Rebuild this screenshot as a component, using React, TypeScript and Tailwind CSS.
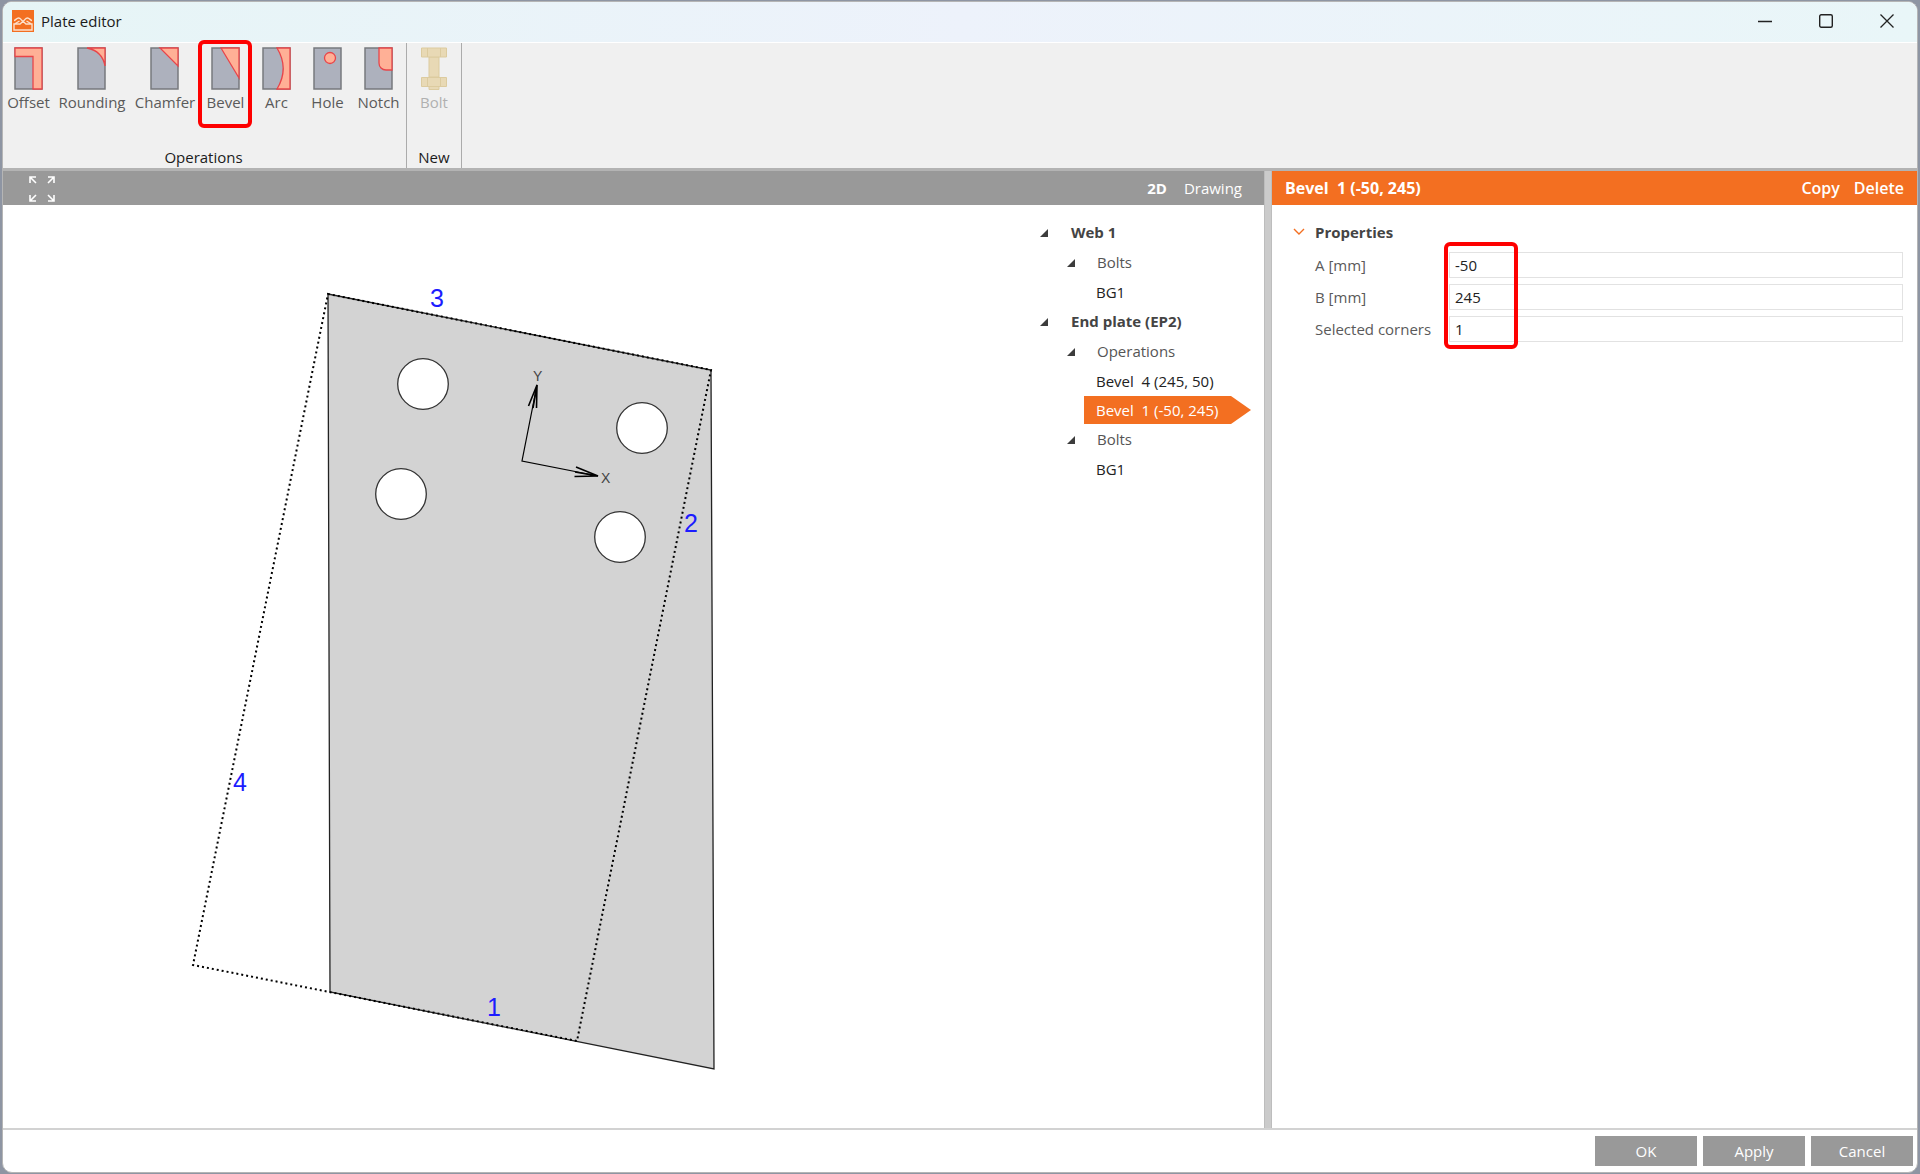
import { useState } from 'react';
import type { ReactNode } from 'react';
import clsx from 'clsx';

type TreeItem = {
  label: string;
  level: 0 | 1 | 2;
};

const TREE: TreeItem[] = [
  { label: 'Web 1', level: 0 },
  { label: 'Bolts', level: 1 },
  { label: 'BG1', level: 2 },
  { label: 'End plate (EP2)', level: 0 },
  { label: 'Operations', level: 1 },
  { label: 'Bevel  4 (245, 50)', level: 2 },
  { label: 'Bevel  1 (-50, 245)', level: 2 },
  { label: 'Bolts', level: 1 },
  { label: 'BG1', level: 2 },
];

const FIELDS = [
  { id: 'a', label: 'A [mm]', value: '-50' },
  { id: 'b', label: 'B [mm]', value: '245' },
  { id: 'corners', label: 'Selected corners', value: '1' },
];

const HOLES = [
  [420, 179],
  [639, 223],
  [398, 289],
  [617, 332],
];

function PlateIcon({ children }: { children?: ReactNode }) {
  return (
    <svg width="30" height="43" viewBox="0 0 30 43" aria-hidden="true">
      <rect x="1" y="1" width="27" height="41" fill="#adb1bd" stroke="#77797e" strokeWidth="1.5" />
      <g fill="#ffb096" stroke="#e8454a" strokeWidth="1.3">
        {children}
      </g>
    </svg>
  );
}

function BoltIcon() {
  return (
    <svg width="28" height="43" viewBox="0 0 28 43" aria-hidden="true">
      <g fill="#e8d9b5" stroke="#dccb9f">
        <path d="M9 10h10v20H9z" />
        <path d="M9 39h10v3.500H9z" />
        <path d="M1.500 1h25v9h-25z" />
        <path d="M1.500 30.500h25v9h-25z" />
        <path d="M7.500 1v9M20.500 1v9M7.500 30.500v9M20.500 30.500v9" />
      </g>
    </svg>
  );
}

const OPERATIONS = [
  {
    name: 'Offset',
    width: 'w-[51px]',
    shape: <path d="M1 1h27v41h-9V9.500H1z" />,
  },
  {
    name: 'Rounding',
    width: 'w-[76px]',
    shape: <path d="M10 1h18v18C26 8 20 3 10 1z" />,
  },
  {
    name: 'Chamfer',
    width: 'w-[70px]',
    shape: <path d="M10 1h18v18z" />,
  },
  {
    name: 'Bevel',
    width: 'w-[51px]',
    shape: <path d="M10 1h18v30z" />,
  },
  {
    name: 'Arc',
    width: 'w-[51px]',
    shape: <path d="M15 1h13v41H15C23.500 28 23.500 15 15 1z" />,
  },
  {
    name: 'Hole',
    width: 'w-[51px]',
    shape: <circle cx="17" cy="11" r="5.500" />,
  },
  {
    name: 'Notch',
    width: 'w-[51px]',
    shape: <path d="M15 1h13v22h-6c-4 0-7-3-7-7z" />,
  },
];

function TitleBar() {
  return (
    <header className="flex h-[41px] shrink-0 items-center justify-between border-b border-white bg-linear-to-r from-[#e6f5f6] via-[#edf2fb] to-[#e9f6f8] pb-[2px] pl-[9px] text-[#1b1b1b]">
      <div className="flex items-center gap-[7px]">
        <svg width="22" height="22" viewBox="0 0 22 22" aria-hidden="true">
          <path d="M0 0h22v22H0z" fill="#f36f21" />
          <path
            d="M7.500 14H2v6h18v-6h-5.500M2 10.500c1.500 0 2.500-2.500 4.500-2.500 1.500 0 2 .8 3 2l5 4.500M20 10.500c-1.500 0-2.500-2.500-4.500-2.500-1.500 0-2 .8-3 2l-5 4.500M2.500 14l5-3M19.500 14l-5-3"
            fill="none"
            stroke="#fde0cb"
            strokeWidth="1.400"
          />
        </svg>
        <h1 className="text-[15px]">Plate editor</h1>
      </div>
      <div className="flex h-full">
        <button aria-label="Minimize" className="flex w-[61px] items-center justify-center">
          <svg width="14" height="14" viewBox="0 0 14 14" stroke="#222" strokeWidth="1.300">
            <path d="M0 7.500h14" />
          </svg>
        </button>
        <button aria-label="Maximize" className="flex w-[61px] items-center justify-center">
          <svg width="14" height="14" viewBox="0 0 14 14" fill="none" stroke="#222" strokeWidth="1.400">
            <rect x="0.700" y="0.700" width="12.600" height="12.600" rx="1.500" />
          </svg>
        </button>
        <button aria-label="Close" className="flex w-[61px] items-center justify-center">
          <svg width="14" height="14" viewBox="0 0 14 14" stroke="#222" strokeWidth="1.300">
            <path d="M0.500 0.500l13 13M13.500 0.500l-13 13" />
          </svg>
        </button>
      </div>
    </header>
  );
}

function Ribbon() {
  return (
    <div className="flex h-[125px] shrink-0 bg-[#f0f0f0] text-[15px]">
      <section className="flex flex-col justify-between border-r border-[#ababab] pt-1 pr-[2px]">
        <div className="flex">
          {OPERATIONS.map((op) => (
            <button
              key={op.name}
              className={clsx('relative flex flex-col items-center text-[#5a5a5a]', op.width)}
            >
              <PlateIcon>{op.shape}</PlateIcon>
              <span className="leading-6">{op.name}</span>
              {op.name === 'Bevel' && (
                <span className="absolute -top-[7px] -bottom-[14px] -left-[2px] z-10 w-[54px] rounded-md border-4 border-[#fe0000]" />
              )}
            </button>
          ))}
        </div>
        <h2 className="text-center leading-[22px] text-[#1b1b1b]">Operations</h2>
      </section>
      <section className="flex w-[55px] flex-col items-center justify-between border-r border-[#ababab] pt-1">
        <button disabled className="flex flex-col items-center text-[#b0b0b0]">
          <BoltIcon />
          <span className="leading-6">Bolt</span>
        </button>
        <h2 className="leading-[22px] text-[#1b1b1b]">New</h2>
      </section>
    </div>
  );
}

function PlateDrawing() {
  return (
    <svg
      className="min-w-0 flex-1"
      viewBox="0 0 1024 920"
      preserveAspectRatio="xMinYMin meet"
      role="img"
      aria-label="Plate geometry"
    >
      <path d="M325 89L708 165L711 864L327 787z" fill="#d3d3d3" stroke="#222" strokeWidth="1.300" />
      <path
        d="M325 89L708 165L574 836L190 760z"
        fill="none"
        stroke="#000"
        strokeWidth="2"
        strokeDasharray="2 3"
      />
      {HOLES.map(([cx, cy]) => (
        <circle key={`${cx}-${cy}`} cx={cx} cy={cy} r="25.300" fill="#fff" stroke="#333" strokeWidth="1.300" />
      ))}
      <g fill="none" stroke="#000" strokeWidth="1.200">
        <path d="M534 180L519 256L595 271" />
        <path d="M525.500 201L534 180L533.500 203L534 180L530 203" strokeWidth="1.600" />
        <path d="M573 262L595 271L571.500 271.500M595 271L572 267" strokeWidth="1.600" />
      </g>
      <g className="font-['Liberation_Sans'] text-[14px]" fill="#444">
        <text x="530" y="176">Y</text>
        <text x="598" y="278">X</text>
      </g>
      <g className="font-['Liberation_Sans'] text-[25px]" fill="#1c1cff">
        <text x="427" y="102">3</text>
        <text x="681" y="327">2</text>
        <text x="230" y="586">4</text>
        <text x="484" y="811">1</text>
      </g>
    </svg>
  );
}

function Tree() {
  const [selected, setSelected] = useState('Bevel  1 (-50, 245)');

  return (
    <ul className="w-[237px] shrink-0 pt-[13px] text-[15px] whitespace-pre">
      {TREE.map((item, i) => {
        if (item.level === 2) {
          const active = item.label === selected;
          return (
            <li key={i} className="mb-px flex h-7 pl-[57px]">
              <button
                onClick={() => setSelected(item.label)}
                className={clsx(
                  'flex items-center pl-3',
                  active ? 'w-[147px] bg-[#f36f21] text-white' : 'text-[#222]'
                )}
              >
                {item.label}
              </button>
              {active && (
                <svg width="20" height="28" viewBox="0 0 20 28" aria-hidden="true">
                  <path d="M0 0l20 14L0 28z" fill="#f36f21" />
                </svg>
              )}
            </li>
          );
        }
        return (
          <li
            key={i}
            className={clsx(
              'mb-[2px] flex h-7 items-center',
              item.level === 0 ? 'pl-[13px] font-bold text-[#444]' : 'pl-[40px] text-[#555]'
            )}
          >
            <button aria-label={`Collapse ${item.label}`} className={item.level === 0 ? 'w-[31px]' : 'w-[30px]'}>
              <svg width="8" height="8" viewBox="0 0 8 8" className="mt-px">
                <path d="M8 0v8H0z" fill="#3c3c3c" />
              </svg>
            </button>
            {item.label}
          </li>
        );
      })}
    </ul>
  );
}

function Viewer() {
  return (
    <main className="flex min-w-0 flex-1 flex-col">
      <div className="flex h-[34px] shrink-0 items-center justify-between bg-[#999] pr-[22px] pl-[26px] text-[15px] text-white">
        <button aria-label="Zoom to fit" className="pt-[2px]">
          <svg width="26" height="26" viewBox="0 0 26 26" fill="none" stroke="#fff" strokeWidth="1.600">
            <path d="M1 7V1h6M1 1l6 6M19 1h6v6M25 1l-6 6M1 19v6h6M1 25l6-6M25 19v6h-6M25 25l-6-6" />
          </svg>
        </button>
        <div className="flex gap-[17px]">
          <button className="font-bold">2D</button>
          <button>Drawing</button>
        </div>
      </div>
      <div className="flex min-h-0 flex-1 bg-white">
        <PlateDrawing />
        <Tree />
      </div>
    </main>
  );
}

function PropertiesPanel() {
  return (
    <aside className="flex w-[34%] max-w-[645px] shrink-0 flex-col bg-white text-[15px]">
      <div className="flex h-[34px] shrink-0 items-center justify-between bg-[#f36f21] px-[13px] text-base whitespace-pre text-white">
        <h2 className="font-bold">Bevel  1 (-50, 245)</h2>
        <div className="flex gap-[14px] font-semibold">
          <button>Copy</button>
          <button>Delete</button>
        </div>
      </div>
      <div className="pt-[13px] pr-[14px] pl-[21px]">
        <button className="flex h-7 items-center gap-[10px] font-bold text-[#444]">
          <svg width="12" height="8" viewBox="0 0 12 8" fill="none" stroke="#f36f21" strokeWidth="1.400">
            <path d="M1 1l5 5 5-5" />
          </svg>
          Properties
        </button>
        <div className="relative mt-1.5 flex flex-col gap-[6px] pl-[22px]">
          {FIELDS.map((field) => (
            <div key={field.id} className="flex h-[26px] items-center">
              <label htmlFor={field.id} className="w-[134px] shrink-0 text-[#5a5a5a]">
                {field.label}
              </label>
              <input
                id={field.id}
                defaultValue={field.value}
                className="h-full min-w-0 flex-1 border border-[#e2e2e2] px-[5px] text-[#222] outline-none"
              />
            </div>
          ))}
          <div className="pointer-events-none absolute -top-[10px] -bottom-[7px] left-[151px] w-[74px] rounded-md border-4 border-[#fe0000]" />
        </div>
      </div>
    </aside>
  );
}

export default function App() {
  return (
    <div className="h-screen bg-[#8e95a3] pt-px pr-[2px] pb-px pl-[2px] font-['Open_Sans','Noto_Sans',sans-serif]">
      <div className="flex h-full flex-col overflow-hidden rounded-[10px] border border-[#b5b5b5] bg-white">
        <TitleBar />
        <Ribbon />
        <div className="flex min-h-0 flex-1 border-t-3 border-b-2 border-[#b3b3b3] border-b-[#d2d2d2]">
          <Viewer />
          <div className="w-2 shrink-0 border-x border-[#bdbdbd] bg-[#cbcbcb]" />
          <PropertiesPanel />
        </div>
        <footer className="flex h-[42px] shrink-0 items-center justify-end gap-[6px] pr-[4px] text-[15px] text-white">
          {['OK', 'Apply', 'Cancel'].map((action) => (
            <button key={action} className="h-[30px] w-[102px] bg-[#999]">
              {action}
            </button>
          ))}
        </footer>
      </div>
    </div>
  );
}
